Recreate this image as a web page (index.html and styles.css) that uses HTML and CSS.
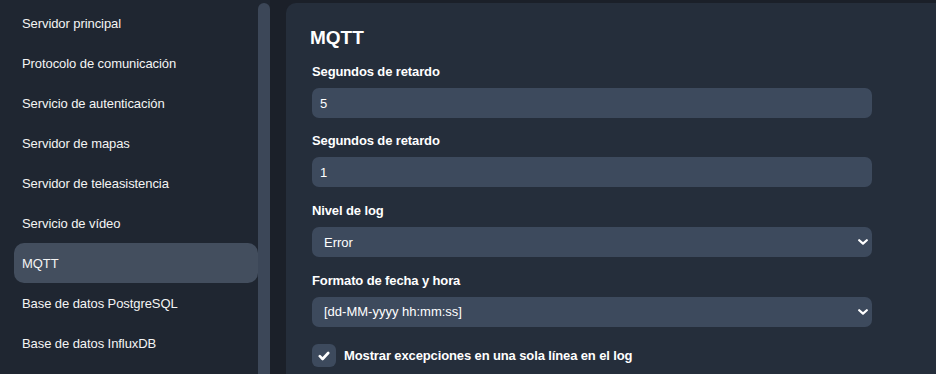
FILE: index.html
```html
<!DOCTYPE html>
<html lang="es">
<head>
    <meta charset="UTF-8">
    <meta name="viewport" content="width=device-width, initial-scale=1.0">
    <title>Configuración - MQTT</title>
    <link rel="stylesheet" href="styles.css">
</head>
<body>
    <div class="layout">
        <aside class="sidebar">
            <nav class="menu">
                <a class="menu-item" href="#">Servidor principal</a>
                <a class="menu-item" href="#">Protocolo de comunicación</a>
                <a class="menu-item" href="#">Servicio de autenticación</a>
                <a class="menu-item" href="#">Servidor de mapas</a>
                <a class="menu-item" href="#">Servidor de teleasistencia</a>
                <a class="menu-item" href="#">Servicio de vídeo</a>
                <a class="menu-item active" href="#">MQTT</a>
                <a class="menu-item" href="#">Base de datos PostgreSQL</a>
                <a class="menu-item" href="#">Base de datos InfluxDB</a>
            </nav>
            <div class="scroll-track"><div class="scroll-thumb"></div></div>
        </aside>

        <main class="panel">
            <h2 class="panel-title">MQTT</h2>
            <form class="form">
                <div class="field">
                    <label for="delay-1">Segundos de retardo</label>
                    <input class="control" id="delay-1" type="text" value="5">
                </div>
                <div class="field">
                    <label for="delay-2">Segundos de retardo</label>
                    <input class="control" id="delay-2" type="text" value="1">
                </div>
                <div class="field">
                    <label for="log-level">Nivel de log</label>
                    <div class="select-wrap">
                        <select class="control select" id="log-level">
                            <option>Error</option>
                            <option>Warning</option>
                            <option>Info</option>
                            <option>Debug</option>
                        </select>
                        <svg class="chevron" viewBox="0 0 10 6" width="10" height="6"><path d="M1.2 1.2 L5 4.6 L8.8 1.2" fill="none" stroke="#fff" stroke-width="2.2" stroke-linecap="round" stroke-linejoin="round"/></svg>
                    </div>
                </div>
                <div class="field">
                    <label for="date-format">Formato de fecha y hora</label>
                    <div class="select-wrap">
                        <select class="control select" id="date-format">
                            <option>[dd-MM-yyyy hh:mm:ss]</option>
                            <option>[yyyy-MM-dd hh:mm:ss]</option>
                        </select>
                        <svg class="chevron" viewBox="0 0 10 6" width="10" height="6"><path d="M1.2 1.2 L5 4.6 L8.8 1.2" fill="none" stroke="#fff" stroke-width="2.2" stroke-linecap="round" stroke-linejoin="round"/></svg>
                    </div>
                </div>
                <label class="check">
                    <input type="checkbox" checked>
                    <span class="check-box">
                        <svg viewBox="0 0 12 10" width="12" height="10"><path d="M1.8 5.2 L4.6 8 L10.2 2" fill="none" stroke="#fff" stroke-width="2.6" stroke-linecap="round" stroke-linejoin="round"/></svg>
                    </span>
                    <span>Mostrar excepciones en una sola línea en el log</span>
                </label>
            </form>
        </main>
    </div>
</body>
</html>
```

FILE: styles.css
```css
body {
    margin: 0;
    height: 100vh;
    overflow: hidden;
    background-color: #1b2029;
    color: #fff;
    font-family: "Liberation Sans", Arial, sans-serif;
    font-size: 13px;
    letter-spacing: -0.08px;
}
.layout {
    display: flex;
    height: 100%;
}
.sidebar {
    display: flex;
    width: 270px;
    flex-shrink: 0;
}
.menu {
    width: 258px;
    padding-top: 3px;
    background-color: #1f2631;
}
.menu-item {
    display: flex;
    align-items: center;
    height: 40px;
    margin-left: 14px;
    padding-left: 8px;
    border-radius: 10px;
    color: #f4f4f4;
    text-decoration: none;
}
.menu-item.active {
    background-color: #434e5e;
}
.scroll-track {
    width: 12px;
    padding-top: 3px;
    background-color: #1f2631;
}
.scroll-thumb {
    height: 100%;
    border-radius: 6px 6px 0 0;
    background-color: #3c4758;
}
.panel {
    flex: 1;
    margin: 3px 0 0 16px;
    padding: 24px 0 0 24px;
    background-color: #252e3b;
    border-top-left-radius: 10px;
}
.panel-title {
    margin: 0 0 13px;
    font-size: 19px;
    line-height: 22px;
    font-weight: bold;
    letter-spacing: 0;
}
.form {
    width: 560px;
    margin-left: 2px;
}
.field {
    margin-bottom: 13.4px;
}
.field label {
    display: block;
    margin-bottom: 6px;
    font-weight: bold;
    line-height: 20px;
    letter-spacing: -0.12px;
}
.control {
    display: block;
    box-sizing: border-box;
    width: 100%;
    height: 30px;
    padding: 0 8px;
    border: none;
    border-radius: 7px;
    background-color: #3d4a5d;
    color: #fff;
    font-family: inherit;
    font-size: 13px;
    outline: none;
}
.select-wrap {
    position: relative;
}
.select {
    height: 30.5px;
    padding: 0 30px 0 12px;
    appearance: none;
    -webkit-appearance: none;
}
.chevron {
    position: absolute;
    right: 4px;
    top: 12px;
    pointer-events: none;
}
.check {
    display: flex;
    align-items: center;
    gap: 8px;
    margin-top: 17px;
    font-weight: bold;
    letter-spacing: -0.12px;
}
.check input {
    display: none;
}
.check-box {
    display: flex;
    align-items: center;
    justify-content: center;
    width: 24px;
    height: 23px;
    border-radius: 6px;
    background-color: #3d4a5d;
}
```
